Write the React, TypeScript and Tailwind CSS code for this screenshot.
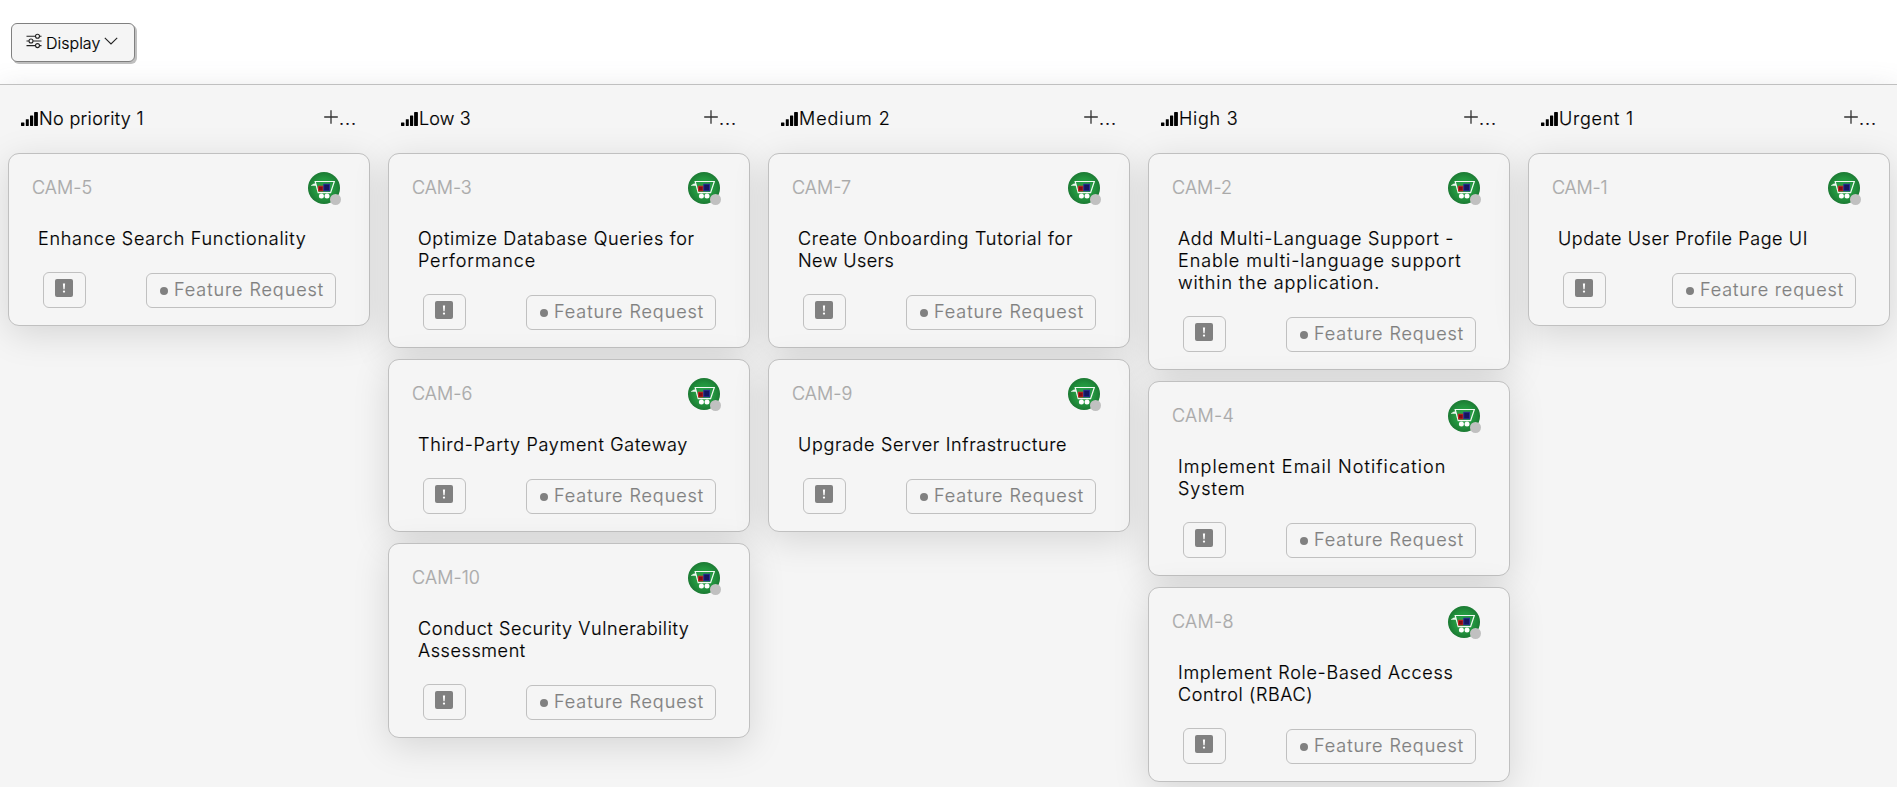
import React from "react";

type Line = { text: string; tracking: string };
type Ticket = { id: Line; title: Line[]; tag: Line };
type Column = { name: Line; tickets: Ticket[] };

const REQUEST: Line = { text: "Feature Request", tracking: "tracking-[0.92px]" };
const REQUEST_LOWER: Line = { text: "Feature request", tracking: "tracking-[0.86px]" };

const columns: Column[] = [
  {
    name: { text: "No priority 1", tracking: "tracking-[0.34px]" },
    tickets: [
      {
        id: { text: "CAM-5", tracking: "tracking-[0.05px]" },
        title: [{ text: "Enhance Search Functionality", tracking: "tracking-[0.74px]" }],
        tag: REQUEST,
      },
    ],
  },
  {
    name: { text: "Low 3", tracking: "tracking-[0.1px]" },
    tickets: [
      {
        id: { text: "CAM-3", tracking: "tracking-[-0.08px]" },
        title: [
          { text: "Optimize Database Queries for", tracking: "tracking-[0.71px]" },
          { text: "Performance", tracking: "tracking-[0.9px]" },
        ],
        tag: REQUEST,
      },
      {
        id: { text: "CAM-6", tracking: "tracking-[0.05px]" },
        title: [{ text: "Third-Party Payment Gateway", tracking: "tracking-[0.7px]" }],
        tag: REQUEST,
      },
      {
        id: { text: "CAM-10", tracking: "tracking-[0.1px]" },
        title: [
          { text: "Conduct Security Vulnerability", tracking: "tracking-[0.58px]" },
          { text: "Assessment", tracking: "tracking-[0.6px]" },
        ],
        tag: REQUEST,
      },
    ],
  },
  {
    name: { text: "Medium 2", tracking: "tracking-[0.95px]" },
    tickets: [
      {
        id: { text: "CAM-7", tracking: "tracking-[0px]" },
        title: [
          { text: "Create Onboarding Tutorial for", tracking: "tracking-[0.72px]" },
          { text: "New Users", tracking: "tracking-[0.45px]" },
        ],
        tag: REQUEST,
      },
      {
        id: { text: "CAM-9", tracking: "tracking-[0.05px]" },
        title: [{ text: "Upgrade Server Infrastructure", tracking: "tracking-[0.66px]" }],
        tag: REQUEST,
      },
    ],
  },
  {
    name: { text: "High 3", tracking: "tracking-[0.75px]" },
    tickets: [
      {
        id: { text: "CAM-2", tracking: "tracking-[0.08px]" },
        title: [
          { text: "Add Multi-Language Support -", tracking: "tracking-[0.73px]" },
          { text: "Enable multi-language support", tracking: "tracking-[0.92px]" },
          { text: "within the application.", tracking: "tracking-[0.87px]" },
        ],
        tag: REQUEST,
      },
      {
        id: { text: "CAM-4", tracking: "tracking-[0.3px]" },
        title: [
          { text: "Implement Email Notification", tracking: "tracking-[1.08px]" },
          { text: "System", tracking: "tracking-[0.95px]" },
        ],
        tag: REQUEST,
      },
      {
        id: { text: "CAM-8", tracking: "tracking-[0.28px]" },
        title: [
          { text: "Implement Role-Based Access", tracking: "tracking-[0.72px]" },
          { text: "Control (RBAC)", tracking: "tracking-[0.65px]" },
        ],
        tag: REQUEST,
      },
    ],
  },
  {
    name: { text: "Urgent 1", tracking: "tracking-[0.76px]" },
    tickets: [
      {
        id: { text: "CAM-1", tracking: "tracking-[-0.2px]" },
        title: [{ text: "Update User Profile Page UI", tracking: "tracking-[0.6px]" }],
        tag: REQUEST_LOWER,
      },
    ],
  },
];

function SlidersIcon() {
  return (
    <svg width="16" height="16" viewBox="0 0 16 16" fill="none" stroke="#222" strokeWidth="1.1" className="shrink-0">
      <path d="M0.5 3.2H9.4M13.6 3.2H15.5M0.5 8H2.9M7.1 8H15.5M0.5 12.6H9.4M13.6 12.6H15.5" />
      <circle cx="11.5" cy="3.2" r="2" />
      <circle cx="5" cy="8" r="2" />
      <circle cx="11.5" cy="12.6" r="2" />
    </svg>
  );
}

function SignalIcon() {
  return (
    <svg width="17" height="14" viewBox="0 0 17 14" fill="#000" className="shrink-0">
      <rect x="0" y="10.6" width="3.4" height="3.4" rx="0.4" />
      <rect x="4.8" y="7.2" width="3" height="6.8" rx="0.4" />
      <rect x="9" y="3.6" width="3.2" height="10.4" rx="0.4" />
      <rect x="13.1" y="0" width="3.8" height="14" rx="0.4" />
    </svg>
  );
}

function PlusIcon() {
  return (
    <svg width="14" height="14" viewBox="0 0 14 14" fill="none" stroke="#333" strokeWidth="1.3" className="shrink-0">
      <path d="M7 0.2V13.8M0.2 7H13.8" />
    </svg>
  );
}

function CartAvatar() {
  return (
    <div className="relative size-8">
      <svg width="32" height="32" viewBox="0 0 32 32">
        <defs>
          <radialGradient id="cart-green">
            <stop offset="0" stopColor="#2bab4c" />
            <stop offset="0.6" stopColor="#23963f" />
            <stop offset="1" stopColor="#1b7a33" />
          </radialGradient>
        </defs>
        <circle cx="16" cy="16" r="16" fill="url(#cart-green)" />
        <path d="M3 13.2L6 11.6H8V13.8H3Z" fill="#e8f5ea" />
        <path d="M7.2 9.5H26.3L22.6 20.6H10.2L7.2 9.5Z" fill="none" stroke="#f2faf3" strokeWidth="1.2" />
        <rect x="10.4" y="14.2" width="4.6" height="4.7" fill="#7a1014" stroke="#d01c22" strokeWidth="0.9" />
        <rect x="15.8" y="12.2" width="5.8" height="6.6" fill="#151560" stroke="#2b2b9c" strokeWidth="0.9" />
        <circle cx="13.4" cy="24" r="2.5" fill="#fff" />
        <circle cx="19" cy="24" r="2.5" fill="#fff" />
      </svg>
      <span className="absolute -right-px -bottom-px size-[11px] rounded-full bg-[#c0c0c0]" />
    </div>
  );
}

function PriorityIcon() {
  return (
    <svg width="18" height="18" viewBox="0 0 18 18" className="shrink-0">
      <rect width="18" height="18" rx="2" fill="#808080" />
      <path d="M7.9 4.6H10.1L9.6 10.2H8.4Z" fill="#fff" />
      <circle cx="9" cy="12.6" r="1.15" fill="#fff" />
    </svg>
  );
}

function TicketCard({ ticket }: { ticket: Ticket }) {
  return (
    <article className="rounded-[11px] border border-[#c0c0c0] bg-[#f5f5f5] pt-[18px] pb-[17px] shadow-[0_8px_36px_0_rgba(0,0,0,0.13)]">
      <div className="flex h-8 items-center justify-between pr-[29px] pl-[23px]">
        <span className={"text-[#a9a9a9] " + ticket.id.tracking}>{ticket.id.text}</span>
        <CartAvatar />
      </div>
      <h3 className="mt-6 pl-[29px] text-black">
        {ticket.title.map((line) => (
          <span key={line.text} className={"block whitespace-nowrap " + line.tracking}>
            {line.text}
          </span>
        ))}
      </h3>
      <div className="mt-[22px] flex h-9 items-end justify-between pr-[33px] pl-[34px]">
        <div className="flex h-9 w-[43px] rounded-md border border-[#c0c0c0] pt-[6px] pl-[11px]">
          <PriorityIcon />
        </div>
        <div className="flex h-[35px] items-start gap-[6px] rounded-md border border-[#c0c0c0] pt-[5px] pr-[11px] pl-[13px] text-[#808080]">
          <span className="mt-2 size-2 rounded-full bg-[#808080]" />
          <span className={ticket.tag.tracking}>{ticket.tag.text}</span>
        </div>
      </div>
    </article>
  );
}

function BoardColumn({ column }: { column: Column }) {
  return (
    <section className="w-[362px] shrink-0">
      <header className="flex h-[68px] pt-[23px] pl-[13px]">
        <div className="flex h-[22px] items-center gap-px">
          <SignalIcon />
          <span className={"whitespace-nowrap text-black " + column.name.tracking}>{column.name.text}</span>
        </div>
        <div className="mr-[13px] ml-auto flex h-[22px] items-start gap-px">
          <span className="pt-[2px]">
            <PlusIcon />
          </span>
          <span className="tracking-[0.9px] text-black">...</span>
        </div>
      </header>
      <div className="flex flex-col gap-[11px]">
        {column.tickets.map((ticket) => (
          <TicketCard key={ticket.id.text} ticket={ticket} />
        ))}
      </div>
    </section>
  );
}

export default function App() {
  return (
    <div className="h-[787px] overflow-hidden bg-white font-['Inter',sans-serif] text-[18px] leading-[22px] font-light [-webkit-text-stroke:0.2px]">
      <div className="flex h-[84px] items-start pt-[23px] pl-[11px]">
        <button className="flex h-[39px] w-[124px] items-center rounded-md border border-[#808080] bg-[#f5f5f5] pl-[14px] text-[16px] text-black shadow-[2px_2px_0_0_#c0c0c0]">
          <span className="-mt-[3px]">
            <SlidersIcon />
          </span>
          <span className="ml-[4px]">Display</span>
          <svg width="14" height="8" viewBox="0 0 14 8" fill="none" stroke="#222" strokeWidth="1.1" className="-mt-[4px] ml-[4px]">
            <path d="M0.8 0.8L7 7L13.2 0.8" />
          </svg>
        </button>
      </div>
      <main className="relative flex h-[703px] gap-[18px] border-t border-[#c0c0c0] bg-[#f5f5f5] pl-2 shadow-[0_7px_29px_0_rgba(100,100,111,0.2)]">
        {columns.map((column) => (
          <BoardColumn key={column.name.text} column={column} />
        ))}
      </main>
    </div>
  );
}
